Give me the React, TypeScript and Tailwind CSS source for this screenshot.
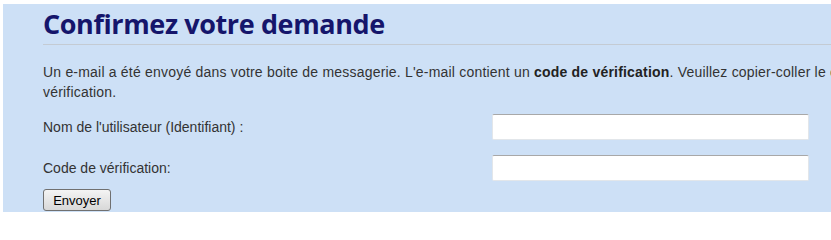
export default function App() {
  return (
    <div className="w-[831px] h-[232px] overflow-hidden bg-white font-['Liberation_Sans',Arial,sans-serif]">
      <div className="ml-[3px] mt-[4px] w-[1000px] h-[208px] bg-[#cde0f6] pl-[40px] pt-[3px]">
        {/* Title */}
        <h1 className="font-['Open_Sans',Tahoma,sans-serif] text-[27px] font-bold leading-[34px] tracking-[-0.4px] text-[#15156b]">
          Confirmez votre demande
        </h1>
        <div className="mt-[3px] h-px bg-[#c4cbd3]" />

        {/* Message */}
        <p className="mt-[17px] whitespace-nowrap text-[14px] leading-[20px] tracking-[0.2px] text-[#333333]">
          Un e-mail a été envoyé dans votre boite de messagerie. L'e-mail contient un{" "}
          <b className="font-bold text-[#222222]">code de vérification</b>. Veuillez copier-coller le code de
          <br />
          vérification.
        </p>

        {/* Form */}
        <div className="mt-[12px] flex flex-col gap-[15px]">
          <Row label="Nom de l'utilisateur (Identifiant) :" />
          <Row label="Code de vérification:" />
        </div>
        <button className="mt-[8px] h-[22px] w-[68px] rounded-[3px] border border-[#707070] bg-gradient-to-b from-[#f4f4f4] to-[#d8d8d8] text-[13px] leading-none text-black">
          Envoyer
        </button>
      </div>
    </div>
  );
}

function Row({ label }: { label: string }) {
  return (
    <div className="flex items-center">
      <label className="w-[449px] text-[14px] text-[#333333]">{label}</label>
      <input
        type="text"
        className="h-[26px] w-[317px] rounded-[2px] border border-[#e2e6ea] border-t-[#a8a8a8] bg-white outline-none"
      />
    </div>
  );
}
